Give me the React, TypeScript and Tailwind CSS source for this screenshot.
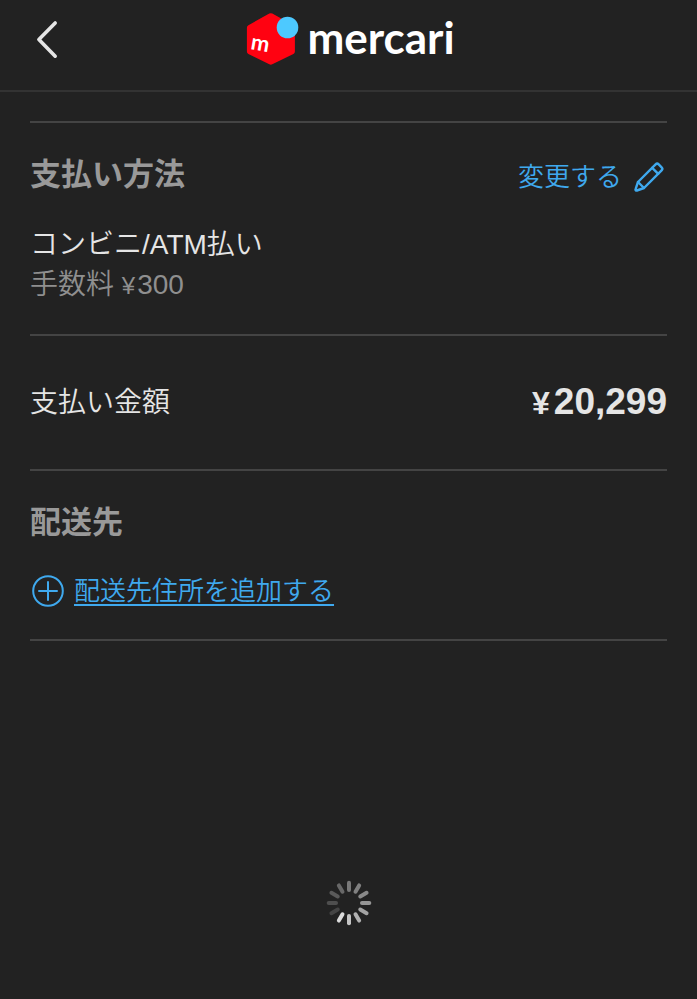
import type { ReactNode } from 'react';

const SPINNER_SHADES = [
  '#787878',
  '#808080',
  '#898989',
  '#969696',
  '#a3a3a3',
  '#b1b1b1',
  '#c4c4c4',
  '#dcdcdc',
  '#444444',
  '#4e4e4e',
  '#5a5a5a',
  '#686868',
];

function MercariLogo() {
  return (
    <div className="flex items-center gap-2 pl-1">
      <svg width="53" height="54" viewBox="0 0 53 54" aria-hidden="true">
        <path
          d="M23.3 1.6a3 3 0 0 1 3 0L47.4 13.2a3 3 0 0 1 1.5 2.6v23.6a3 3 0 0 1-1.5 2.6L26.3 52.3a3 3 0 0 1-3 0L2.4 42a3 3 0 0 1-1.5-2.6V15.8a3 3 0 0 1 1.5-2.6Z"
          fill="#ff0211"
        />
        <circle cx="41.5" cy="15.5" r="10.8" fill="#4dc9ff" />
        <text
          x="4"
          y="37"
          fill="#fff"
          fontSize="22"
          fontWeight="700"
          fontFamily="Lato, sans-serif"
          transform="rotate(10 4 37)"
        >
          m
        </text>
      </svg>
      <span className="pb-1 font-['Lato',sans-serif] text-[44px] leading-[48px] font-bold text-white">
        mercari
      </span>
    </div>
  );
}

function PencilIcon() {
  return (
    <svg width="30" height="30" viewBox="0 0 30 30" fill="none" stroke="#3fa9ee" strokeWidth="2.4" strokeLinejoin="round" strokeLinecap="round" aria-hidden="true">
      <path d="M21.6 2.4a2.2 2.2 0 0 1 3.1 0l2.9 2.9a2.2 2.2 0 0 1 0 3.1L10 26 2.9 28.5a1 1 0 0 1-1.3-1.3L4 20Z" />
      <path d="m18.2 5.8 6 6M4 20l6 6" />
    </svg>
  );
}

function PlusCircleIcon() {
  return (
    <svg width="32" height="32" viewBox="0 0 32 32" fill="none" stroke="#3fa9ee" strokeWidth="2" strokeLinecap="round" aria-hidden="true">
      <circle cx="16" cy="16" r="14.8" />
      <path d="M16 7v18M7 16h18" />
    </svg>
  );
}

function Spinner() {
  return (
    <svg width="46" height="46" viewBox="-23 -23 46 46" role="status" aria-label="読み込み中">
      {SPINNER_SHADES.map((shade, i) => (
        <line
          key={shade}
          x1="0"
          y1="-13"
          x2="0"
          y2="-20.3"
          stroke={shade}
          strokeWidth="4"
          strokeLinecap="round"
          transform={`rotate(${i * 30})`}
        />
      ))}
    </svg>
  );
}

function SectionTitle({ children }: { children: ReactNode }) {
  return <h2 className="text-[31px] leading-10 font-bold text-[#999]">{children}</h2>;
}

export default function App() {
  return (
    <div className="min-h-screen bg-[#222] font-['Liberation_Sans','Noto_Sans_CJK_JP',sans-serif] font-[350] text-[#e5e5e5]">
      <header className="grid h-[92px] grid-cols-[1fr_auto_1fr] items-center border-b-2 border-[#333] px-[30px] pb-3">
        <button type="button" aria-label="戻る" className="justify-self-start p-1">
          <svg width="26" height="40" viewBox="0 0 26 40" fill="none" stroke="#e5e5e5" strokeWidth="3.6" strokeLinecap="round" strokeLinejoin="round">
            <path d="M21.2 4 4.9 20.4l16.3 16.8" />
          </svg>
        </button>
        <MercariLogo />
      </header>

      <main className="px-[30px] pt-[29px]">
        <section className="border-t-2 border-[#444] pt-8 pb-7">
          <div className="flex items-start justify-between">
            <SectionTitle>支払い方法</SectionTitle>
            <button type="button" className="flex items-center gap-3 pt-0.5 pr-[3px] text-[26px] leading-10 text-[#3fa9ee]">
              変更する
              <PencilIcon />
            </button>
          </div>
          <p className="mt-7 text-[28px] leading-10">コンビニ/ATM払い</p>
          <p className="text-[28px] leading-10 text-[#8f8f8f]">
            手数料 <span className="mr-0.5 text-[24px]">¥</span>300
          </p>
        </section>

        <section className="flex items-center justify-between border-t-2 border-[#444] py-[46px]">
          <h2 className="text-[28px] leading-10">支払い金額</h2>
          <p className="text-[37px] leading-10 font-bold">
            <span className="mr-1 text-[32px]">¥</span>20,299
          </p>
        </section>

        <section className="border-y-2 border-[#444] pt-8 pb-7">
          <SectionTitle>配送先</SectionTitle>
          <div className="mt-7 flex items-center gap-[10px] pl-[2px] text-[#3fa9ee]">
            <PlusCircleIcon />
            <a href="#address" className="text-[26px] leading-10 underline decoration-2 underline-offset-4">
              配送先住所を追加する
            </a>
          </div>
        </section>

        <div className="flex justify-center pt-[239px] pb-16">
          <Spinner />
        </div>
      </main>
    </div>
  );
}
